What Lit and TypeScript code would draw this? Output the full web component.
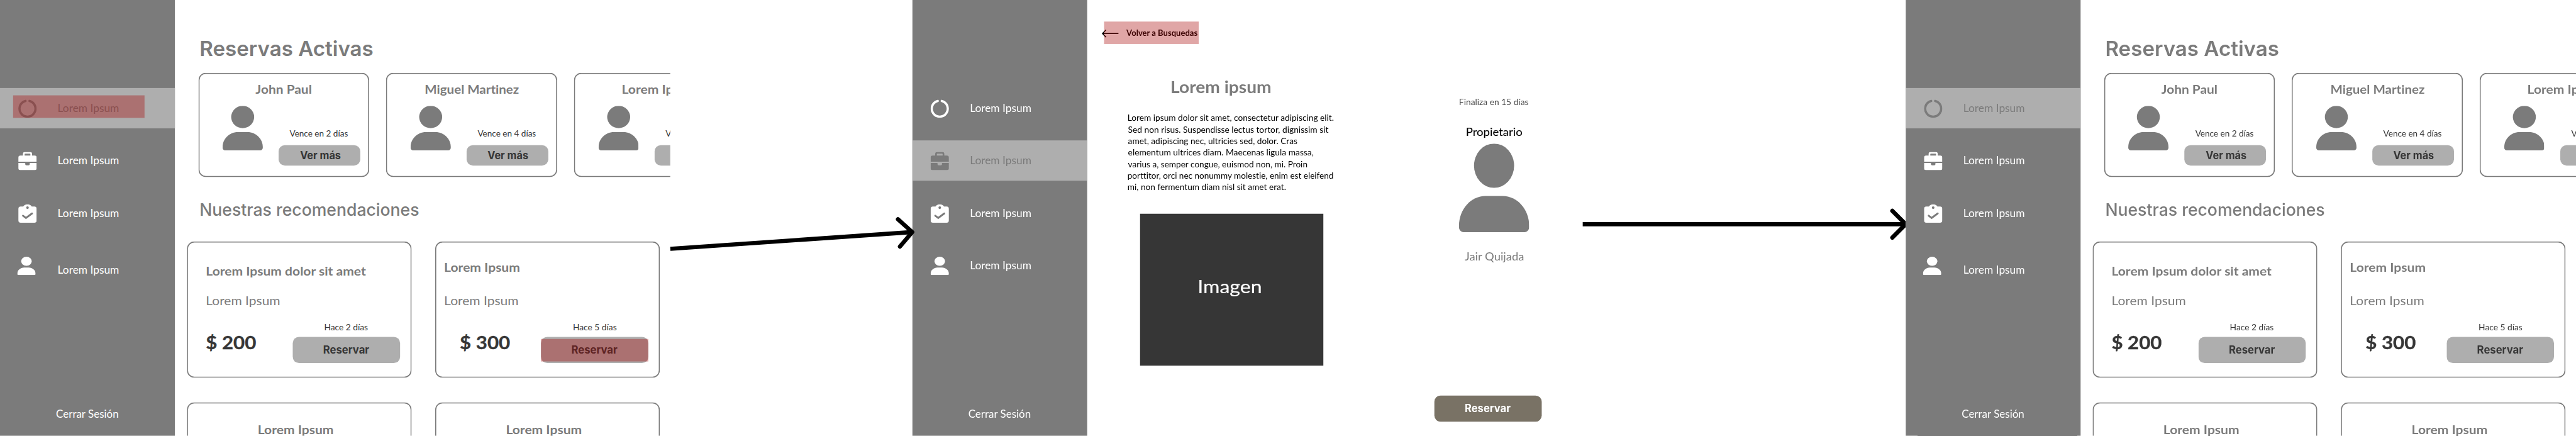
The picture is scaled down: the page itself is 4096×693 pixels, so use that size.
import { LitElement, html, css, svg, unsafeCSS, nothing } from "lit";
import { customElement, property } from "lit/decorators.js";
import { classMap } from "lit/directives/class-map.js";
import { styleMap } from "lit/directives/style-map.js";

const SCALE = 4096 / 4919;

const BODY = 'Lato, "Noto Sans", sans-serif';
const UI = 'Inter, "Open Sans", sans-serif';

type Face = { weight: number; size: number; line: number; family: string; edge?: number };

const FACES: Record<string, Face> = {
  nav: { weight: 400, size: 19.6, line: 24, family: BODY },
  name: { weight: 700, size: 23.5, line: 28, family: BODY },
  sub: { weight: 400, size: 23.5, line: 28, family: BODY },
  small: { weight: 400, size: 15.7, line: 20, family: BODY },
  back: { weight: 700, size: 15.7, line: 20, family: BODY },
  copy: { weight: 400, size: 15.7, line: 22, family: BODY },
  price: { weight: 700, size: 35.3, line: 42, family: BODY, edge: 0.4 },
  picture: { weight: 400, size: 35.3, line: 42, family: BODY, edge: 0.2 },
  topic: { weight: 700, size: 31.4, line: 38, family: BODY },
  role: { weight: 400, size: 21.6, line: 26, family: BODY, edge: 0.15 },
  owner: { weight: 400, size: 21.6, line: 26, family: BODY },
  h1: { weight: 600, size: 40, line: 48, family: UI },
  h2: { weight: 500, size: 32, line: 40, family: UI },
  button: { weight: 700, size: 20, line: 24, family: UI },
};

const faceStyles = unsafeCSS(
  `.label { display: block; flex: none; white-space: nowrap; }
   .ink { display: block; width: max-content; transform-origin: 0 50%; }` +
    Object.entries(FACES)
      .map(
        ([k, f]) =>
          `.${k} { font: ${f.weight} ${f.size}px/${f.line}px ${f.family}; font-variant-ligatures: none; -webkit-text-stroke: ${f.edge ?? 0}px currentColor; }`
      )
      .join("\n")
);

const pen = document.createElement("canvas").getContext("2d")!;

// A single line of text widened or narrowed so that its ink spans exactly `width` pixels.
function label(text: string, face: string, width: number) {
  const f = FACES[face];
  pen.font = `${f.weight} ${f.size}px ${f.family}`;
  // Any tracking at all keeps ligatures out of the measurement.
  (pen as any).letterSpacing = "0.001px";
  const m = pen.measureText(text);
  const ink = m.actualBoundingBoxLeft + m.actualBoundingBoxRight;
  const stretch = width / ink;
  return html`<span class="label ${face}" style=${styleMap({ width: `${width}px` })}
    ><span
      class="ink"
      style=${styleMap({
        marginLeft: `${(m.actualBoundingBoxLeft * stretch).toFixed(2)}px`,
        transform: `scaleX(${stretch.toFixed(4)})`,
      })}
      >${text}</span
    ></span
  >`;
}

const person = html`<svg class="person" viewBox="0 0 134 169" preserveAspectRatio="none">
  <ellipse cx="67" cy="42.3" rx="38.3" ry="42.3" />
  <path
    d="M0 157C0 125.500 22.700 100 50.700 100H83.300C111.300 100 134 125.500 134 157V159.500C134 164.700 130.200 169 125.600 169H8.400C3.800 169 0 164.700 0 159.500Z"
  />
</svg>`;

const ring = html`<svg viewBox="0 0 35 35">
  <path
    d="M13.600 2.700A15.300 15.300 0 1 0 21.400 2.700"
    fill="none"
    stroke="currentColor"
    stroke-width="4.400"
    stroke-linecap="round"
  />
</svg>`;

const briefcase = html`<svg viewBox="0 0 35 35">
  <path
    fill-rule="evenodd"
    d="M8.800 7V4A4 4 0 0 1 12.800 0H22.200A4 4 0 0 1 26.200 4V7H31A4 4 0 0 1 35 11V18.700H0V11A4 4 0 0 1 4 7ZM12 7H23V4.200A1 1 0 0 0 22 3.200H13A1 1 0 0 0 12 4.200Z"
  />
  <path
    d="M0 21H13.200V23.300A2.200 2.200 0 0 0 15.400 25.500H19.600A2.200 2.200 0 0 0 21.800 23.300V21H35V31A4 4 0 0 1 31 35H4A4 4 0 0 1 0 31Z"
  />
</svg>`;

const clipboard = html`<svg viewBox="0 0 35 35">
  <path
    fill-rule="evenodd"
    d="M4.500 4.200H9.400C10.800 1.700 13.900 0 17.500 0S24.200 1.700 25.600 4.200H30.500A4.500 4.500 0 0 1 35 8.700V30.500A4.500 4.500 0 0 1 30.500 35H4.500A4.500 4.500 0 0 1 0 30.500V8.700A4.500 4.500 0 0 1 4.500 4.200ZM17.500 3.900A2.500 2.500 0 1 0 17.500 8.900A2.500 2.500 0 1 0 17.500 3.900Z"
  />
  <path
    class="tick"
    d="M8.900 21.800L14.600 26L26.200 17.400"
    fill="none"
    stroke-width="3.500"
    stroke-linecap="round"
  />
</svg>`;

const base = css`
  :host {
    display: block;
    flex: none;
  }
  * {
    box-sizing: border-box;
  }
  svg {
    display: block;
    flex: none;
    fill: currentColor;
  }
  .hot {
    position: absolute;
    height: 43px;
    background: rgba(166, 0, 0, 0.35);
  }
  .btn {
    position: relative;
    display: flex;
    justify-content: center;
    align-items: center;
    width: 205px;
    height: 50px;
    border-radius: 12px;
    background: #aeaeae;
    color: #363636;
  }
`;

@customElement("side-nav")
class SideNav extends LitElement {
  @property({ type: Number }) active = 0;
  @property({ type: Boolean }) highlight = false;
  @property({ type: Boolean }) aligned = false;

  static styles = [
    base,
    faceStyles,
    css`
      .bar {
        display: flex;
        flex-direction: column;
        width: 334px;
        height: 832px;
        padding: 168px 0 29.5px;
        background: #7b7b7b;
        color: #fff;
      }
      .list {
        display: flex;
        flex-direction: column;
        gap: 23px;
      }
      .item {
        position: relative;
        display: flex;
        align-items: flex-start;
        gap: 41px;
        height: 77px;
        padding: 22px 0 0 35px;
      }
      .item svg {
        width: 35px;
        height: 35px;
      }
      .item .label {
        margin-top: 4.5px;
      }
      .tick {
        stroke: #7b7b7b;
      }
      .on {
        background: #aeaeae;
        color: #7b7b7b;
      }
      .low {
        padding-left: 33px;
        gap: 43px;
      }
      .low .label {
        margin-top: 13px;
      }
      .item .hot {
        left: 25px;
        top: 14px;
        width: 251px;
      }
      .exit {
        margin: auto 0 0 107px;
      }
    `,
  ];

  render() {
    return html`<nav class="bar">
      <div class="list">
        ${[ring, briefcase, clipboard, person].map(
          (icon, i) => html`<div
            class=${classMap({ item: true, on: i === this.active, low: i === 3 && !this.aligned })}
          >
            ${icon}${label("Lorem Ipsum", "nav", 115.2)}
            ${this.highlight && i === this.active ? html`<div class="hot"></div>` : nothing}
          </div>`
        )}
      </div>
      <div class="exit">${label("Cerrar Sesión", "nav", 119)}</div>
    </nav>`;
  }
}

@customElement("bookings-screen")
class BookingsScreen extends LitElement {
  @property({ type: Boolean }) highlight = false;

  static styles = [
    base,
    faceStyles,
    css`
      .screen {
        display: flex;
        width: 1280px;
        height: 832px;
        overflow: hidden;
        background: #fff;
        color: #7b7b7b;
      }
      .main {
        flex: none;
        width: 946px;
        height: 832px;
        padding-top: 68.5px;
        overflow: hidden;
      }
      .title {
        padding-left: 48.6px;
      }
      .people {
        display: flex;
        gap: 32.5px;
        margin-top: 22.5px;
        padding-left: 44.5px;
      }
      .card {
        flex: none;
        border-radius: 14px;
        box-shadow: inset 0 0 0 2px #7b7b7b;
      }
      .guest {
        width: 326.3px;
        height: 198.7px;
      }
      .who {
        display: flex;
        justify-content: center;
        padding-top: 17px;
      }
      .guest:nth-child(2) .who {
        padding-left: 3px;
      }
      .row {
        display: flex;
        padding: 18px 0 0 46.5px;
      }
      .person {
        width: 76.8px;
        height: 85px;
      }
      .due {
        padding: 43px 0 0 30.2px;
      }
      .due .small {
        margin-left: 21.5px;
        color: #363636;
      }
      .due .btn {
        width: 156px;
        height: 39px;
        margin-top: 12px;
        padding: 1px 0 0 3px;
      }
      .second {
        margin-top: 43.5px;
      }
      .offers {
        display: grid;
        grid-template-columns: 429px 429px;
        grid-auto-rows: 260px;
        gap: 47px 45.300px;
        margin: 39.8px 0 0 23px;
      }
      .head {
        height: 98px;
        padding: 41.7px 0 0 37.2px;
      }
      .tight .head {
        padding: 34.7px 0 0 17.6px;
      }
      .kind {
        padding-left: 38px;
      }
      .tight .kind {
        padding-left: 18.6px;
      }
      .foot {
        display: flex;
        justify-content: space-between;
        padding: 0 22px 0 37.2px;
        color: #363636;
      }
      .tight .foot {
        padding-left: 47.8px;
      }
      .cost {
        padding-top: 46px;
      }
      .act {
        padding-top: 27.3px;
      }
      .act .small {
        margin-left: 61.5px;
      }
      .act .btn {
        margin-top: 8.7px;
      }
      .btn .hot {
        left: 0;
        top: 4px;
        width: 205px;
      }
      .peek {
        padding: 37.7px 0 0 135.8px;
      }
    `,
  ];

  guest(name: string, width: number, due: string) {
    return html`<article class="card guest">
      <div class="who">${label(name, "name", width)}</div>
      <div class="row">
        ${person}
        <div class="due">
          ${label(due, "small", 111.7)}
          <div class="btn">${label("Ver más", "button", 77.7)}</div>
        </div>
      </div>
    </article>`;
  }

  offer(title: string, width: number, price: string, age: string, tight: boolean) {
    return html`<article class=${classMap({ card: true, tight })}>
      <div class="head">${label(title, "name", width)}</div>
      <div class="kind">${label("Lorem Ipsum", "sub", 138.6)}</div>
      <div class="foot">
        <div class="cost">${label(price, "price", 94.6)}</div>
        <div class="act">
          ${label(age, "small", 82.8)}
          <div class="btn">
            ${label("Reservar", "button", 87)}
            ${this.highlight && tight ? html`<div class="hot"></div>` : nothing}
          </div>
        </div>
      </div>
    </article>`;
  }

  render() {
    return html`<section class="screen">
      <side-nav .active=${0} .highlight=${this.highlight}></side-nav>
      <div class="main">
        <div class="title">${label("Reservas Activas", "h1", 329.2)}</div>
        <div class="people">
          ${this.guest("John Paul", 106.6, "Vence en 2 días")}
          ${this.guest("Miguel Martinez", 179.2, "Vence en 4 días")}
          ${this.guest("Lorem Ipsum", 143.3, "Vence en 4 días")}
        </div>
        <div class="title second">${label("Nuestras recomendaciones", "h2", 416.2)}</div>
        <div class="offers">
          ${this.offer("Lorem Ipsum dolor sit amet", 305.4, "$ 200", "Hace 2 días", false)}
          ${this.offer("Lorem Ipsum", 143.2, "$ 300", "Hace 5 días", true)}
          <article class="card peek">${label("Lorem Ipsum", "name", 143.2)}</article>
          <article class="card peek">${label("Lorem Ipsum", "name", 143.2)}</article>
        </div>
      </div>
    </section>`;
  }
}

const COPY: [string, number][] = [
  ["Lorem ipsum dolor sit amet, consectetur adipiscing elit.", 393],
  ["Sed non risus. Suspendisse lectus tortor, dignissim sit", 383.3],
  ["amet, adipiscing nec, ultricies sed, dolor. Cras", 323.7],
  ["elementum ultrices diam. Maecenas ligula massa,", 354],
  ["varius a, semper congue, euismod non, mi. Proin", 342.3],
  ["porttitor, orci nec nonummy molestie, enim est eleifend", 392],
  ["mi, non fermentum diam nisl sit amet erat.", 301],
];

@customElement("detail-screen")
class DetailScreen extends LitElement {
  static styles = [
    base,
    faceStyles,
    css`
      .screen {
        display: flex;
        width: 1280px;
        height: 832px;
        overflow: hidden;
        background: #fff;
        color: #7b7b7b;
      }
      .link {
        position: relative;
        display: flex;
        align-items: flex-start;
        gap: 14.3px;
        padding: 53px 0 0 28px;
        color: #000;
      }
      .link svg {
        width: 32px;
        height: 16px;
        margin-top: 3px;
      }
      .link .hot {
        left: 32px;
        top: 41px;
        width: 181px;
      }
      .columns {
        display: flex;
        padding-left: 78.3px;
      }
      .text {
        width: 393px;
        padding-top: 74px;
      }
      .topic {
        margin: 0 0 29px 83px;
      }
      .copy {
        color: #000;
      }
      .picture-box {
        display: flex;
        justify-content: center;
        align-items: center;
        width: 350px;
        height: 290px;
        margin: 40px 0 0 22.7px;
        padding: 0 5px 13px 0;
        background: #363636;
        color: #fff;
      }
      .owner-box {
        display: flex;
        flex-direction: column;
        align-items: center;
        width: 229px;
        margin-left: 191.7px;
        padding-top: 111px;
      }
      .small {
        color: #4a4a4a;
      }
      .role {
        margin: 35px 0 9px;
        color: #000;
      }
      .person {
        width: 134px;
        height: 169px;
      }
      .owner {
        margin-top: 32.7px;
      }
      .btn {
        align-self: flex-start;
        margin-top: 253.3px;
        background: #797265;
        color: #fff;
      }
    `,
  ];

  render() {
    return html`<section class="screen">
      <side-nav .active=${1} .aligned=${true}></side-nav>
      <div class="main">
        <div class="link">
          <svg viewBox="0 0 32 16">
            <path
              d="M32 8H1.200M8 1L1.200 8L8 15"
              fill="none"
              stroke="currentColor"
              stroke-width="2"
              stroke-linejoin="round"
            />
          </svg>
          ${label("Volver a Busquedas", "back", 137.3)}
          <div class="hot"></div>
        </div>
        <div class="columns">
          <div class="text">
            ${label("Lorem ipsum", "topic", 189.4)}
            ${COPY.map(([line, width]) => label(line, "copy", width))}
            <div class="picture-box">${label("Imagen", "picture", 117.6)}</div>
          </div>
          <div class="owner-box">
            ${label("Finaliza en 15 días", "small", 132)} ${label("Propietario", "role", 107)}
            ${person} ${label("Jair Quijada", "owner", 113)}
            <div class="btn">${label("Reservar", "button", 86.5)}</div>
          </div>
        </div>
      </div>
    </section>`;
  }
}

@customElement("app-root")
class AppRoot extends LitElement {
  static styles = css`
    :host {
      display: block;
      width: 4096px;
      height: 693px;
      overflow: hidden;
      background: #fff;
    }
    .board {
      display: flex;
      width: 4919px;
      height: 832px;
      transform: scale(${unsafeCSS(SCALE)});
      transform-origin: 0 0;
    }
    .flow {
      display: block;
      flex: none;
      height: 832px;
      fill: none;
      stroke: #000;
      stroke-width: 8;
      stroke-linejoin: round;
    }
    .first {
      position: relative;
      z-index: 1;
      width: 462px;
      overflow: visible;
    }
    .next {
      width: 617px;
      overflow: hidden;
    }
    .tip {
      stroke-linecap: round;
    }
  `;

  render() {
    return html`<div class="board">
      <bookings-screen .highlight=${true}></bookings-screen>
      <svg class="flow first" viewBox="0 0 462 832">
        ${svg`<path d="M0 475L462 443"/><path class="tip" d="M434.700 418.500L462 443L438.500 470.700"/>`}
      </svg>
      <detail-screen></detail-screen>
      <svg class="flow next" viewBox="0 0 617 832">
        ${svg`<path d="M0 428H617"/><path class="tip" d="M591.500 402.500L617 428L591.500 453.500"/>`}
      </svg>
      <bookings-screen></bookings-screen>
    </div>`;
  }
}
